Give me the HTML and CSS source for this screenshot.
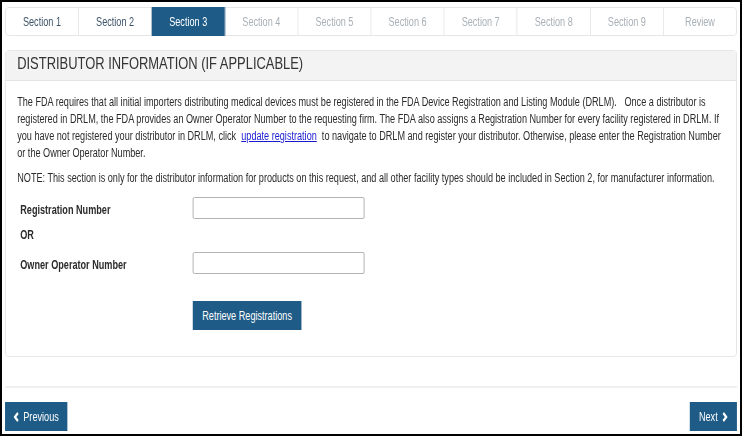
FILE: index.html
```html
<!DOCTYPE html>
<html>
<head>
<meta charset="utf-8">
<link rel="stylesheet" href="styles.css">
</head>
<body>
<div class="frame">
  <div class="page">
    <nav class="tabs">
      <div class="tab done">Section 1</div>
      <div class="tab done">Section 2</div>
      <div class="tab active">Section 3</div>
      <div class="tab">Section 4</div>
      <div class="tab">Section 5</div>
      <div class="tab">Section 6</div>
      <div class="tab">Section 7</div>
      <div class="tab">Section 8</div>
      <div class="tab">Section 9</div>
      <div class="tab">Review</div>
    </nav>
    <section class="panel">
      <div class="panel-head">DISTRIBUTOR INFORMATION (IF APPLICABLE)</div>
      <div class="panel-body">
        <p class="intro">The FDA requires that all initial importers distributing medical devices must be registered in the FDA Device Registration and Listing Module (DRLM).&nbsp;&nbsp; Once a distributor is<br>registered in DRLM, the FDA provides an Owner Operator Number to the requesting firm. The FDA also assigns a Registration Number for every facility registered in DRLM. If<br>you have not registered your distributor in DRLM, click&nbsp; <a href="#">update registration</a>&nbsp; to navigate to DRLM and register your distributor. Otherwise, please enter the Registration Number<br>or the Owner Operator Number.</p>
        <p class="note">NOTE: This section is only for the distributor information for products on this request, and all other facility types should be included in Section 2, for manufacturer information.</p>
        <div class="form">
          <div class="row">
            <label class="lbl">Registration Number</label>
            <input class="field" type="text">
          </div>
          <div class="or">OR</div>
          <div class="row">
            <label class="lbl">Owner Operator Number</label>
            <input class="field" type="text">
          </div>
          <div class="actions">
            <button class="btn retrieve">Retrieve Registrations</button>
          </div>
        </div>
      </div>
    </section>
    <div class="footer">
      <button class="btn nav prev"><svg class="chev" viewBox="0 0 8 10" width="8" height="10"><polyline points="6,1 2,5 6,9" fill="none" stroke="#fff" stroke-width="2.6"/></svg>Previous</button>
      <button class="btn nav next">Next<svg class="chev" viewBox="0 0 8 10" width="8" height="10"><polyline points="2,1 6,5 2,9" fill="none" stroke="#fff" stroke-width="2.6"/></svg></button>
    </div>
  </div>
</div>
</body>
</html>
```

FILE: styles.css
```css
html, body {
  margin: 0;
  padding: 0;
  background: #fff;
}
body {
  font-family: "Liberation Sans", Arial, sans-serif;
  font-size: 12px;
  color: #2b2b2b;
}
.frame {
  box-sizing: border-box;
  width: 742px;
  height: 436px;
  border: 2px solid #000;
  overflow: hidden;
}
/* the reference capture is squeezed horizontally; lay out at full width and squeeze */
.page {
  box-sizing: border-box;
  width: 971px;
  height: 432px;
  padding: 5px 4px 0 4px;
  transform: scaleX(0.76);
  transform-origin: 0 0;
  display: flex;
  flex-direction: column;
}
.tabs {
  display: flex;
  height: 29px;
  border: 1px solid #e2e2e2;
  border-radius: 5px;
  box-sizing: border-box;
}
.tab {
  flex: 1;
  display: flex;
  align-items: center;
  justify-content: center;
  border-right: 1px solid #e2e2e2;
  color: #a9b0b6;
  font-size: 12px;
}
.tab:last-child { border-right: none; }
.tab.done { color: #3d5468; }
.tab.active {
  background: #1e5b86;
  color: #fff;
  margin: -1px 0;
}
.panel {
  margin-top: 14px;
  border: 1px solid #e4e4e4;
  border-radius: 5px;
  height: 307px;
  box-sizing: border-box;
}
.panel-head {
  height: 30px;
  box-sizing: border-box;
  background: #f3f3f3;
  border-bottom: 1px solid #e4e4e4;
  font-size: 17px;
  line-height: 26px;
  padding-left: 15px;
  color: #333;
  border-radius: 5px 5px 0 0;
}
.panel-body {
  padding: 13px 15px 0 15px;
}
.panel-body p {
  margin: 0;
  line-height: 17px;
  white-space: nowrap;
}
.intro a {
  color: #1a1ad0;
  text-decoration: underline;
}
.panel-body .note { margin-top: 8px; }
.form {
  margin-top: 10px;
  padding-left: 4px;
}
.row {
  display: flex;
  align-items: center;
  height: 22px;
}
.lbl {
  width: 227px;
  font-weight: bold;
  padding-top: 3px;
}
.field {
  width: 226px;
  height: 22px;
  box-sizing: border-box;
  border: 1px solid #a9a9a9;
  border-radius: 2px;
  margin: 0;
  padding: 0;
}
.or {
  font-weight: bold;
  height: 33px;
  line-height: 33px;
}
.actions {
  padding-left: 227px;
  margin-top: 27px;
}
.btn {
  background: #1e5b86;
  color: #fff;
  border: none;
  font-family: inherit;
  font-size: 12px;
  height: 29px;
  margin: 0;
  padding: 0;
  cursor: pointer;
}
.retrieve { width: 143px; }
.footer {
  margin-top: 29px;
  border-top: 2px solid #f0f0f0;
  padding-top: 14px;
  display: flex;
  justify-content: space-between;
}
.nav {
  height: 29px;
  display: flex;
  align-items: center;
  gap: 5px;
}
.prev { width: 82px; padding-left: 11px; }
.next { width: 62px; padding-left: 12px; }
.chev { display: block; }
```
